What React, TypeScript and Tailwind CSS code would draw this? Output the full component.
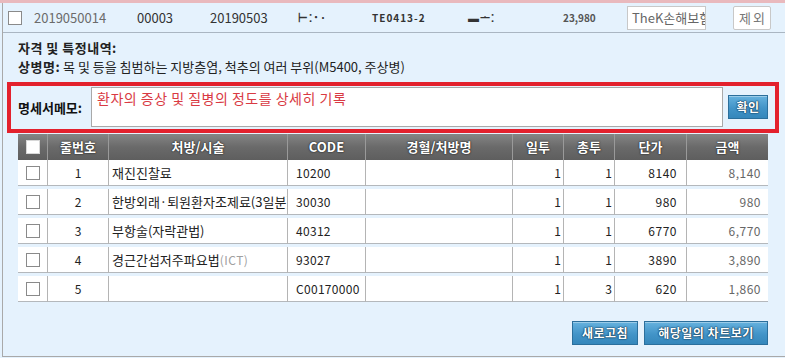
const rows = [
  { no: 1, name: "재진진찰료", code: "10200", il: 1, chong: 1, price: "8140", amount: "8,140" },
  { no: 2, name: "한방외래·퇴원환자조제료(3일분)", code: "30030", il: 1, chong: 1, price: "980", amount: "980" },
  { no: 3, name: "부항술(자락관법)", code: "40312", il: 1, chong: 1, price: "6770", amount: "6,770" },
  { no: 4, name: "경근간섭저주파요법", tail: "(ICT)", code: "93027", il: 1, chong: 1, price: "3890", amount: "3,890" },
  { no: 5, name: "", code: "C00170000", il: 1, chong: 3, price: "620", amount: "1,860" },
];

const cols = "grid grid-cols-[30px_61px_179px_78px_147px_51px_51px_72px_81px]";

const Check = ({ header }: { header?: boolean }) => (
  <span
    className={
      header
        ? "block w-[14px] h-[14px] bg-white border border-[#d8d8d8]"
        : "block w-[14px] h-[14px] bg-white border border-[#8a8a8a]"
    }
  />
);

const BlueButton = ({ label, className }: { label: string; className?: string }) => (
  <button
    className={`h-[24px] border border-[#2b6f9c] bg-[linear-gradient(180deg,#66b2de_0%,#4294c8_55%,#3587bb_100%)] text-white text-[12px] font-bold tracking-[0.5px] shadow-[inset_0_1px_0_rgba(255,255,255,0.35)] [text-shadow:0_0_2px_#123a56,0_0_1px_#123a56,0_0_1px_#123a56] ${className ?? ""}`}
  >
    {label}
  </button>
);

export default function App() {
  return (
    <div
      className="w-[785px] h-[358px] overflow-hidden bg-[#e5f2fd] text-[12px] text-[#222]"
      style={{ fontFamily: '"Noto Sans CJK KR", "Noto Sans", sans-serif' }}
    >
      <div className="h-[3px] bg-[#e9b9bd]" />
      <div className="ml-[2px] h-[354px] border-l border-b border-[#a9a9a9]">
        {/* top record row */}
        <div className="h-[30px] flex items-center border-b border-[#aab6c2] pl-[5px]">
          <Check />
          <span className="ml-[12px] w-[103px] text-[#6b6b6b] text-[13px]">2019050014</span>
          <span className="w-[73px] text-[#333] text-[13px]">00003</span>
          <span className="w-[88px] text-[#333] text-[13px]">20190503</span>
          <span className="w-[74px] text-[#333] text-[11px] font-bold tracking-[1px]">⊢⁚˙·</span>
          <span className="w-[96px] text-[#333] text-[10px] font-bold tracking-[1px]">TE0413-2</span>
          <span className="w-[95px] text-[#333] text-[11px] font-bold tracking-[1px]">▬ᅩ⁚</span>
          <span className="w-[64px] text-[#555] text-[10px] font-bold">23,980</span>
          <div className="w-[79px] h-[24px] bg-white border border-[#c8c8c8] flex items-center px-[4px] overflow-hidden whitespace-nowrap text-[13px] text-[#666]">
            TheK손해보험
          </div>
          <button className="ml-[27px] w-[38px] h-[24px] bg-white border border-[#c8c8c8] rounded-[2px] text-[13px] tracking-[2px] pl-[2px] text-[#777]">
            제외
          </button>
        </div>

        {/* details */}
        <div className="pt-[5px] pl-[15px] leading-[19px] text-[13px]">
          <div className="font-bold tracking-[0.5px]">자격 및 특정내역:</div>
          <div>
            <span className="font-bold tracking-[0.5px]">상병명:</span>{" "}
            목 및 등을 침범하는 지방층염, 척추의 여러 부위(M5400, 주상병)
          </div>
        </div>

        {/* memo */}
        <div className="mt-[6px] ml-[4px] w-[772px] h-[51px] border-4 border-[#e3212d] flex items-start pl-[7px] pr-[7px]">
          <span className="mt-[12px] w-[73px] font-bold text-[13px] text-[#111]">명세서메모:</span>
          <div className="mt-[1px] w-[632px] h-[40px] bg-white border border-[#a9a9a9] pl-[5px] pt-[1px] text-[14px] tracking-[0.5px] text-[#d93a43] leading-[18px]">
            환자의 증상 및 질병의 정도를 상세히 기록
          </div>
          <BlueButton label="확인" className="mt-[9px] ml-[5px] w-[40px] h-[24px]" />
        </div>

        {/* table */}
        <div className="mt-[1px] ml-[15px] w-[750px]">
          <div
            className={`${cols} h-[26px] bg-[linear-gradient(180deg,#858585_0%,#6a6a6a_50%,#5e5e5e_100%)] text-white text-[13px] font-bold [text-shadow:0_0_2px_#222,0_0_1px_#222]`}
          >
            <div className="flex items-center justify-center border-r border-[#9a9a9a]">
              <Check header />
            </div>
            <div className="flex items-center justify-center border-r border-[#9a9a9a]">줄번호</div>
            <div className="flex items-center justify-center border-r border-[#9a9a9a]">처방/시술</div>
            <div className="flex items-center justify-center border-r border-[#9a9a9a]">CODE</div>
            <div className="flex items-center justify-center border-r border-[#9a9a9a]">경혈/처방명</div>
            <div className="flex items-center justify-center border-r border-[#9a9a9a]">일투</div>
            <div className="flex items-center justify-center border-r border-[#9a9a9a]">총투</div>
            <div className="flex items-center justify-center border-r border-[#9a9a9a]">단가</div>
            <div className="flex items-center justify-center">금액</div>
          </div>
          {rows.map((r) => (
            <div key={r.no} className={`${cols} h-[29px] bg-white border-b-[3px] border-[#e5f2fd] shadow-[inset_0_-1px_0_#b4b8bc]`}>
              <div className="flex items-center justify-center border-r border-[#b4b4b4]">
                <Check />
              </div>
              <div className="flex items-center justify-center border-r border-[#b4b4b4]">{r.no}</div>
              <div className="flex items-center pl-[3px] border-r border-[#b4b4b4] overflow-hidden whitespace-nowrap text-[13px]">
                {r.name}
                {r.tail && <span className="text-[#a0a0a0] text-[12px] tracking-[0.5px]">{r.tail}</span>}
              </div>
              <div className="flex items-center pl-[8px] border-r border-[#b4b4b4] tracking-[0.3px]">{r.code}</div>
              <div className="border-r border-[#b4b4b4]" />
              <div className="flex items-center justify-end pr-[2px] border-r border-[#b4b4b4]">{r.il}</div>
              <div className="flex items-center justify-end pr-[2px] border-r border-[#b4b4b4]">{r.chong}</div>
              <div className="flex items-center justify-end pr-[9px] border-r border-[#b4b4b4] tracking-[0.5px]">{r.price}</div>
              <div className="flex items-center justify-end pr-[7px] text-[#666] tracking-[0.5px]">{r.amount}</div>
            </div>
          ))}
        </div>

        {/* actions */}
        <div className="mt-[16px] ml-[15px] w-[750px] flex justify-end gap-[6px]">
          <BlueButton label="새로고침" className="w-[66px]" />
          <BlueButton label="해당일의 차트보기" className="w-[124px]" />
        </div>
      </div>
    </div>
  );
}
